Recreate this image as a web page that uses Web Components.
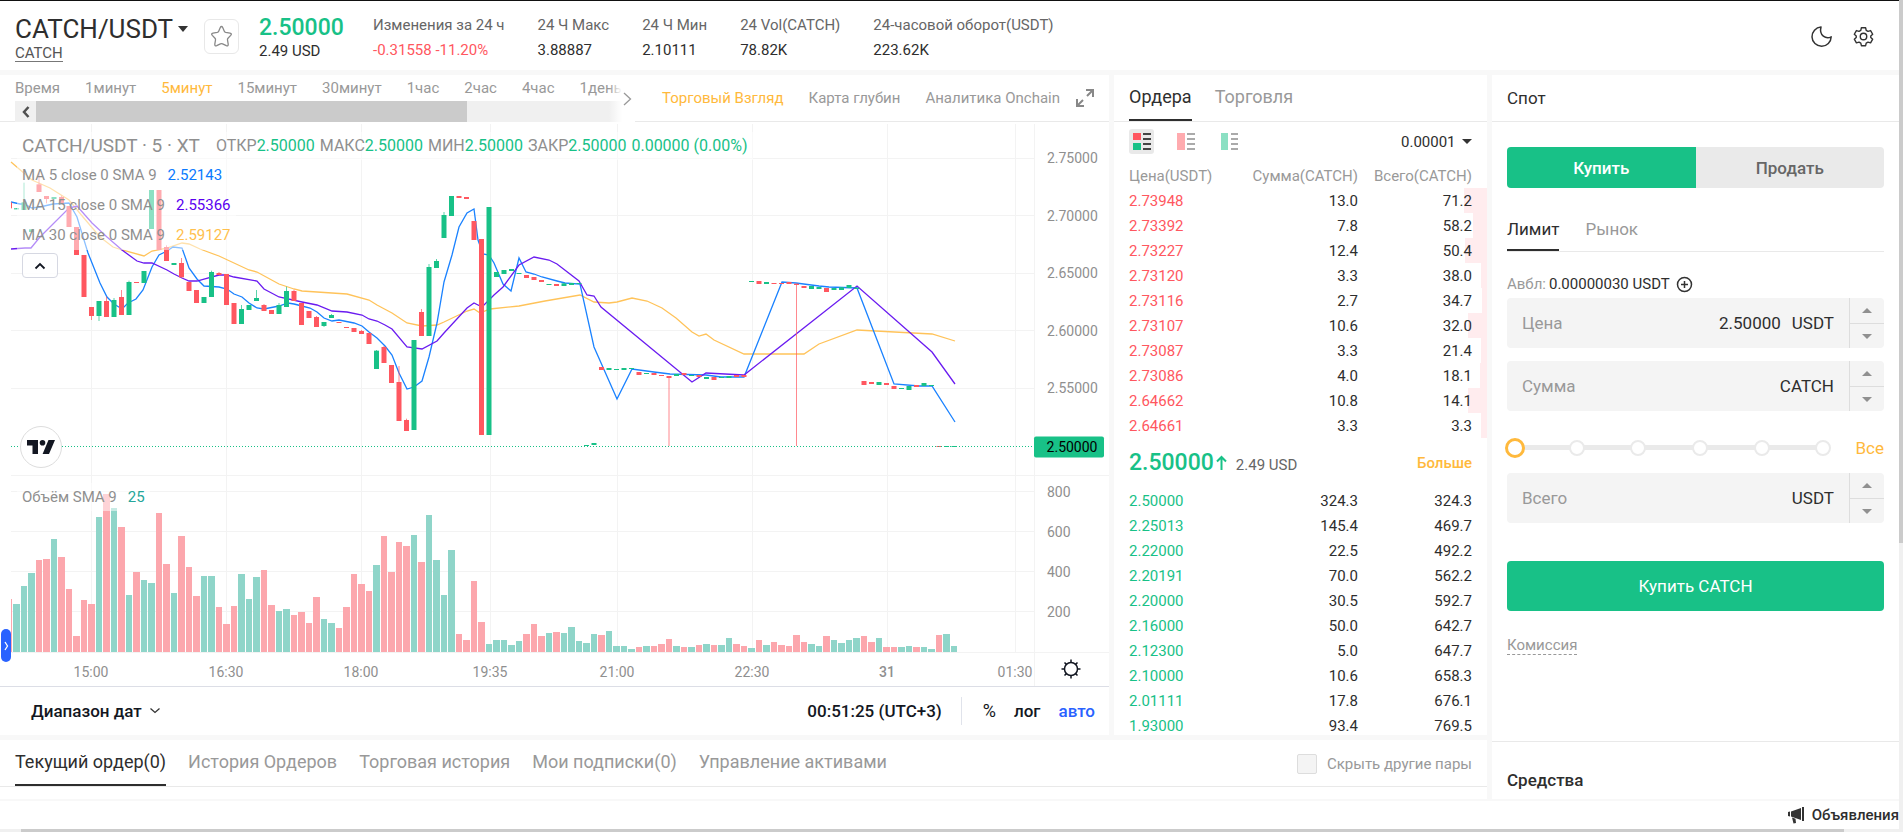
<!DOCTYPE html>
<html lang="ru">
<head>
<meta charset="utf-8">
<title>CATCH/USDT</title>
<style>
html,body{margin:0;height:100%}
body{font-family:Roboto,"Liberation Sans",sans-serif;font-size:15px;line-height:20px;color:#2e2e2e;background:#f8f8f8;
--green:#18c187;--red:#ff5760;--gold:#ffb93c;--muted:#999;--line:#e9e9e9}
</style>
</head>
<body>
<trade-app></trade-app>
<script>
const base=`*{box-sizing:border-box}button{font:inherit;color:inherit;background:none;border:0;padding:0;margin:0;white-space:nowrap}a{color:inherit;text-decoration:none}svg{display:block}`;
function component(name,css,html,setup){
  const t=document.createElement('template');
  t.innerHTML=`<style>${base}${css}</style>${html}`;
  customElements.define(name,class extends HTMLElement{
    constructor(){super();this.attachShadow({mode:'open'});}
    connectedCallback(){
      if(this.shadowRoot.childNodes.length)return;
      this.shadowRoot.append(t.content.cloneNode(true));
      if(setup)setup.call(this,this.shadowRoot);
    }
  });
}

/* one 24-hour figure in the header: caption above, value below */
component('market-stat',
`:host{display:flex;flex-direction:column;gap:5px;white-space:nowrap}
.cap{color:#666}`,
`<span class="cap"><slot name="caption"></slot></span><span><slot></slot></span>`);

component('pair-header',
`:host{display:flex;align-items:flex-start;height:70px;padding:14px 25px 0 15px;background:#fff;border-top:1px solid #111}
h1{margin:0;font-size:26px;line-height:28px;font-weight:400;display:flex;align-items:center;gap:5px}
.pair{width:189px}
.pair a{display:inline-block;border-bottom:1px solid #777;color:#555;line-height:16px;margin-top:1px}
.fav{width:35px;height:35px;border:1px solid #e8e8e8;border-radius:6px;display:grid;place-items:center;margin:4px 20px 0 0}
.last{width:114px;display:flex;flex-direction:column}
.last b{font-size:23px;line-height:26px;font-weight:500;color:var(--green)}
.stats{display:flex;gap:33px;flex:1}
.down{color:var(--red)}
.tools{display:flex;gap:20px;align-items:center;margin-top:10px}`,
`<div class="pair"><h1>CATCH/USDT <svg width="10" height="6"><path d="M0 0h10L5 6z" fill="#333"/></svg></h1><a href="#catch">CATCH</a></div>
<button class="fav" aria-label="В избранное"><svg width="23" height="23" viewBox="0 0 23 23"><path d="M11.500 1.500Q12.200 1.500 12.700 2.600L14.300 6.300Q14.700 7.200 15.700 7.400L20 8.100Q22.300 8.600 20.700 10.400L18 13.200Q17.300 14 17.500 15L18.200 19.200Q18.300 21.400 16.300 20.600L12.600 18.800Q11.500 18.300 10.400 18.800L6.700 20.600Q4.700 21.400 4.800 19.200L5.500 15Q5.700 14 5 13.200L2.300 10.400Q.7 8.600 3 8.100L7.300 7.400Q8.300 7.200 8.700 6.300L10.300 2.600Q10.800 1.500 11.500 1.500z" fill="none" stroke="#888" stroke-width="1.300" stroke-linejoin="round"/></svg></button>
<div class="last"><b>2.50000</b><span>2.49 USD</span></div>
<div class="stats">
<market-stat><span slot="caption">Изменения за 24 ч</span><span class="down">-0.31558 -11.20%</span></market-stat>
<market-stat><span slot="caption">24 Ч Макс</span>3.88887</market-stat>
<market-stat><span slot="caption">24 Ч Мин</span>2.10111</market-stat>
<market-stat><span slot="caption">24 Vol(CATCH)</span>78.82K</market-stat>
<market-stat><span slot="caption">24-часовой оборот(USDT)</span>223.62K</market-stat>
</div>
<div class="tools">
<button aria-label="Тёмная тема"><svg width="23" height="23" viewBox="0 0 23 23"><path d="M11 2A9.600 9.600 0 1 0 21.200 11.800 C16 14.500 8.800 10.500 11 2z" fill="none" stroke="#333" stroke-width="1.500" stroke-linejoin="round"/></svg></button>
<button aria-label="Настройки"><svg width="21" height="21" viewBox="0 0 24 24" fill="none" stroke="#333" stroke-width="1.600" stroke-linejoin="round"><circle cx="12" cy="12" r="3.700"/><path d="M9.600 2h4.800l.7 3 2 1.100 3-.9 2.400 4.200-2.200 2v1.700l2.200 2-2.400 4.200-3-.9-2 1.100-.7 3H9.600l-.7-3-2-1.100-3 .9-2.400-4.200 2.200-2v-1.700l-2.200-2L3.900 5.200l3 .9 2-1.100z"/></svg></button>
</div>`);

component('chart-toolbar',
`:host{display:flex;height:47px;border-bottom:1px solid var(--line);color:var(--muted)}
.times{position:relative;width:620px;margin-left:15px;margin-bottom:-1px}
.row{display:flex;gap:25px;height:26px;padding-top:3px;overflow:hidden}
.row button{height:20px}
.bar{height:21px;display:flex;background:#f0f0f0}
.bar i{width:431px;background:#cbcbcb}
.bar button{width:21px;display:grid;place-items:center}
.fade{position:absolute;right:0;top:0;bottom:0;width:26px;background:linear-gradient(to right,#fff0,#fff 50%);display:flex;align-items:center;justify-content:flex-end}
.fade svg{margin-right:3px}
.on{color:var(--gold)}
.views{flex:1;display:flex;align-items:center;justify-content:flex-end;gap:25px;padding-right:15px}
.views svg{margin-left:-9px}`,
`<div class="times"><div class="row"><button>Время</button><button>1минут</button><button class="on">5минут</button><button>15минут</button><button>30минут</button><button>1час</button><button>2час</button><button>4час</button><button>1день</button></div>
<div class="bar"><button aria-label="Назад"><svg width="8" height="12" viewBox="0 0 8 12"><path d="M6.500 1 2 6l4.500 5" fill="none" stroke="#505050" stroke-width="2.500"/></svg></button><i></i></div>
<div class="fade"><svg width="9" height="16" viewBox="0 0 9 16"><path d="M1 2l6.500 6L1 14" fill="none" stroke="#999" stroke-width="1.300"/></svg></div></div>
<div class="views"><button class="on">Торговый Взгляд</button><button>Карта глубин</button><button>Аналитика Onchain</button>
<button aria-label="Развернуть"><svg width="18" height="18" viewBox="0 0 18 18" fill="none" stroke="#888" stroke-width="2"><path d="M10 1h7v7M17 1l-6 6M8 17H1v-7M1 17l6-6"/></svg></button></div>`);

/* chart space: x from 0 to 1109, y from 0 to 564; prices and volume share it */
const W=1109,H=564;
const candles=`-11R247,247,265,265 -10G265,265,267,267 -9G188,247,270 -8G328,328,336 -7R160,193,216 -6R228,228,237,250 -5G231,231,237 -4R227,231,250 -3R258,258,321 -2R321,321,405 -1R405,405,531 0R561,561,588,600 1G543,543,588,603 2R530,543,591 3G534,540,591 4R510,531,585 5G482,486,585 6R486,486,489 7G453,453,489 8G210,210,327 9R210,210,390 10R376,381,423 11G429,429,435 12R414,429,472 13R486,486,513 14R510,510,549 15G531,531,549 16G452,456,531 17R456,459,465 18R462,462,555 19R549,549,612 20G555,567,612 21G555,555,570 22G510,534,543 23R552,555,573 24R570,570,582 25G549,555,582 26G500,513,561 27R509,513,543 28R549,549,615 29R573,573,594 30R588,591,621 31G606,606,618,621 32G582,585,594 33R606,606,609 34R621,621,624 35R624,624,636 36R630,633,642 37R639,639,672 38G690,692,747 39R678,681,729 40R735,735,789 41R738,786,903 42R896,900,933 43G660,660,930 44R567,576,648 45G432,441,648 46G417,423,444 47G276,285,354 48G228,228,288 49R228,228,234 50R231,231,237 51R303,303,360 52R357,357,945 53G261,261,945 54G456,456,471 55G450,450,462 56G447,447,453 57G459,459,462 58R465,465,474 59R471,471,480 60R480,480,486 61G492,492,495 62R492,492,498 63G490,490,498 64G489,489,495 65G489,489,492 66G975,975,978 67G969,969,975 68R741,741,750 69G744,744,750 70G747,747,750 71G744,744,750 72G744,744,747 73R756,756,765 74G759,759,762 75R759,759,765 76R765,765,768 77R768,768,774,978 78G762,762,768 79R759,759,765 80G765,765,768 81R765,765,771 82G771,771,777 83R771,771,780 84G771,771,774 85G768,768,774 86R765,765,771 87R765,765,771 88G483,483,486 89R483,483,492 90G486,486,492 91R489,489,492 92R489,489,492 93R486,486,492 94R491,491,495,978 95R498,498,504 96G498,498,507 97G501,501,507 98R504,504,516 99G504,504,510 100G502,502,510 101G495,495,504 102G503,503,507 103R783,783,795 104R786,786,792 105G786,786,795 106R789,789,795 107R798,798,807 108G804,804,807 109G798,798,810 110R795,795,801 111G789,789,798 112G795,795,798 113R978,978,981 114G978,978,981 115G978,978,981`;
/* volume heights, one per five-minute bar, first bar eleven steps before 15:00 */
const volumes=`R53 G48 G66 G79 R92 R93 G113 R95 R63 R16 R52 R48 G135 R158 G144 R125 G57 R80 G72 G69 R139 R88 G59 R116 R85 R56 G76 G76 R45 R28 R46 G78 G53 G75 R82 R47 G41 G43 R37 R40 R29 R55 G33 G29 R24 R45 R78 R68 R61 G87 R116 R80 R110 R106 G117 R90 G137 G92 G57 G102 R18 R12 R71 R30 G8 G12 G12 G7 G11 R18 R28 R16 G19 R20 G19 G25 G11 G9 G18 R17 G21 G6 G6 G3 R5 G6 R6 R8 R13 G6 R5 G5 R7 G8 R7 G7 G14 R8 R6 G4 R12 G7 R10 R7 R6 R17 R10 G8 G6 R16 G12 G9 G12 G14 R16 R10 G14 R5 R5 G5 G6 R5 G5 G3 R17 G18 G6`;
const lines={
'#ffc35a':`11,162 32,180 50,188 69,200 83,217 100,237 113,247 122,250 144,256 152,251 167,248 182,243 189,244 200,249 219,256 249,270 257,272 279,284 294,289 302,291 347,294 369,300 377,305 392,313 407,323 422,326 437,325 444,322 467,311 474,309 480,313 490,309 519,306 545,301 580,295 594,302 609,303 617,302 632,298 647,301 662,308 676,318 692,332 699,336 706,334 714,340 744,354 804,354 819,344 857,330 932,334 955,341`,
'#1a82ff':`11,202 20,204 24,204 32,208 40,207 53,204 69,203 77,217 88,253 100,283 107,297 114,304 122,309 128,303 136,299 143,290 152,267 159,255 167,251 173,247 182,248 189,268 197,279 204,286 219,287 227,289 234,294 242,297 249,303 257,308 264,309 279,306 288,303 294,304 302,306 310,308 317,312 324,318 332,321 339,320 354,323 362,326 369,332 377,338 385,346 392,355 399,373 407,389 414,387 422,381 429,357 437,323 444,282 452,255 459,227 467,213 474,209 478,240 483,254 489,255 494,263 503,284 511,291 519,258 526,272 534,274 542,277 557,281 565,283 580,284 594,347 617,399 632,369 654,372 670,374 706,375 721,377 744,377 782,282 796,283 819,286 829,287 857,288 894,384 919,386 932,386 955,422`,
'#6a1bf0':`11,249 25,248 31,248 40,237 69,208 77,206 92,223 107,237 122,250 137,261 144,263 152,263 167,270 174,274 182,278 189,281 197,281 204,279 219,275 227,275 234,277 257,281 264,289 279,297 302,302 317,305 332,311 347,312 362,315 369,319 377,321 385,325 392,329 407,347 422,349 437,341 444,333 467,308 474,303 482,307 494,295 503,287 519,265 534,257 549,260 557,264 579,281 587,295 594,296 601,307 692,382 706,373 744,375 857,286 932,352 955,384`};

component('price-chart',
`:host{position:relative;display:block;min-height:0;border-bottom:1px solid #dcdee6;color:#8f8f8f;font-size:14px}
svg.plot{position:absolute;width:100%;height:100%}
.axis span{position:absolute;line-height:18px;white-space:nowrap}
.price span{left:94.400%;transform:translateY(-50%)}
.time span{transform:translate(-50%,-50%)}
.tag{position:absolute;left:93.200%;right:5px;height:21px;line-height:21px;padding-left:13px;background:var(--green);color:#000;border-radius:2px;transform:translateY(-50%)}
.legend{position:absolute;left:17px;top:10px;display:flex;flex-direction:column;align-items:flex-start;font-size:15px}
.legend>div{background:#ffffff80;padding:0 5px;height:30px;line-height:30px;white-space:nowrap;display:flex}
.legend .title{height:28px;line-height:28px;font-size:16px}
.title strong{font-size:19px;font-weight:400;margin-right:16px}
.title span{margin-right:5px}
.title em,.vol em{font-style:normal;color:var(--green)}
.legend b{font-weight:400;margin-left:11px}
.fold{width:36px;height:25px;border:1px solid #d6d8e2;border-radius:4px;background:#fffc;margin:3px 5px;display:grid;place-items:center}
.vol{position:absolute;left:17px;top:64%;height:28px;line-height:28px;padding:0 5px;background:#ffffff80;font-size:15px;display:flex;gap:11px}
.logo{position:absolute;left:20px;top:304px;width:42px;height:42px;border:1px solid #ddd;border-radius:50%;background:#fff;display:grid;place-items:center}
.gear{position:absolute;left:96.600%;top:97%;transform:translate(-50%,-50%)}
.side{position:absolute;left:1px;top:507px;width:10px;height:33px;border-radius:5px;background:#2962ff;display:grid;place-items:center}`,
`<svg class="plot" viewBox="0 0 ${W} ${H}" preserveAspectRatio="none"></svg>
<div class="axis price"></div><div class="axis time"></div>
<div class="tag">2.50000</div>
<div class="legend"><div class="title"><strong>CATCH/USDT · 5 · XT</strong><span>ОТКР<em>2.50000</em></span><span>МАКС<em>2.50000</em></span><span>МИН<em>2.50000</em></span><span>ЗАКР<em>2.50000</em></span><em>0.00000 (0.00%)</em></div>
<div>MA 5 close 0 SMA 9<b style="color:#0a7aff">2.52143</b></div><div>MA 15 close 0 SMA 9<b style="color:#5a00f0">2.55366</b></div><div>MA 30 close 0 SMA 9<b style="color:#ffc04d">2.59127</b></div>
<button class="fold" aria-label="Свернуть"><svg width="12" height="8"><path d="M1.500 6.500 6 2l4.500 4.500" fill="none" stroke="#131722" stroke-width="1.800"/></svg></button></div>
<div class="vol">Объём SMA 9<em style="color:#26a69a">25</em></div>
<a class="logo" href="#tv" aria-label="TradingView"><svg width="28" height="14" viewBox="0 0 28 14" fill="#131722"><path d="M0 0h11v14H5.500V5.500H0zM21.500 0H28l-6 14h-6.400z"/><circle cx="15.500" cy="2.800" r="2.800"/></svg></a>
<button class="gear" aria-label="Настройки графика"><svg width="20" height="20" viewBox="0 0 20 20" fill="none" stroke="#131722" stroke-width="1.500"><circle cx="10" cy="10" r="6.500"/><path d="M10 3.500V.5M10 19.500v-3M3.500 10h-3M19.500 10h-3M5.400 5.400 3.500 3.500M14.600 5.400l1.900-1.900M5.400 14.600l-1.900 1.900M14.600 14.600l1.900 1.900"/></svg></button>
<button class="side" aria-label="Панель рисования"><svg width="5" height="10"><path d="M1 1l2.500 4L1 9" fill="none" stroke="#fff" stroke-width="1.300"/></svg></button>`,
function(root){
  const Y=v=>v/3-2, X=i=>91+7.5*i, col=c=>c==='R'?'#ff5760':'#18c187';
  let s='<g stroke="#f3f3f3" shape-rendering="crispEdges">';
  for(const x of [91,226,361,490,617,752,887,1015])s+=`<path d="M${x+.5} 2V530"/>`;
  for(const y of [36,93,151,208,266,369,409,449,489])s+=`<path d="M11 ${y+.5}H1034"/>`;
  s+=`<path d="M11 353.5H${W}M11 530.5H${W}M1034.5 2V${H}"/></g><g shape-rendering="crispEdges">`;
  volumes.split(' ').forEach((v,k)=>{const h=+v.slice(1),x=k?X(k-11)-3:11;
    s+=`<rect x="${x}" y="${530-h}" width="${k?6.700:1}" height="${h}" fill="${v[0]==='R'?'#fca7ad':'#8fd5c9'}"/>`;});
  s+='</g>';
  for(const c in lines)s+=`<polyline transform="translate(0 -122)" points="${lines[c]}" fill="none" stroke="${c}" stroke-width="1.300"/>`;
  for(const c of candles.split(' ')){
    const m=/^(-?\d+)([RG])(.*)$/.exec(c),i=+m[1],[a,b,d,e=d]=m[3].split(',').map(Number),x=X(i)+.5;
    if(i<-10){s+=`<rect x="11" y="${Y(a)}" width="1" height="6" fill="${col('R')}"/>`;continue;}
    s+=`<path d="M${x} ${Y(a)}V${Y(e)}" stroke="${col(m[2])}" stroke-opacity=".7"/><rect x="${x-2.5}" y="${Y(b)}" width="5" height="${Math.max(1,(d-b)/3)}" fill="${col(m[2])}"/>`;
  }
  s+=`<path d="M11 324.500H1034" stroke="#18c187" stroke-dasharray="1 2"/>`;
  root.querySelector('.plot').innerHTML=s;
  root.querySelector('.price').innerHTML=[['2.75000',36],['2.70000',94],['2.65000',151],['2.60000',209],['2.55000',266],['800',370],['600',410],['400',450],['200',490]]
    .map(([t,y])=>`<span style="top:${(y/H*100).toFixed(2)}%">${t}</span>`).join('');
  root.querySelector('.time').innerHTML=[['15:00',91],['16:30',226],['18:00',361],['19:35',490],['21:00',617],['22:30',752],['31',887],['01:30',1015]]
    .map(([t,x])=>`<span style="left:${(x/W*100).toFixed(2)}%;top:97.500%${t==='31'?';font-weight:500':''}">${t}</span>`).join('');
  root.querySelector('.tag').style.top=(325/H*100).toFixed(2)+'%';
});

component('range-bar',
`:host{display:flex;align-items:center;height:48px;padding:0 14px 0 31px;font-size:17px;color:#131722}
button{font-weight:500;display:flex;align-items:center;gap:7px}
.clock{margin-left:auto;padding-right:19px;height:28px;border-right:1px solid #e0e3eb;margin-right:21px}
.scale{display:flex;gap:18px}
.on{color:#2962ff}.pc{font-weight:400;font-size:18px}`,
`<button>Диапазон дат <svg width="12" height="8"><path d="M1.500 1.500 6 5.500l4.500-4" fill="none" stroke="#333" stroke-width="1.300"/></svg></button>
<button class="clock">00:51:25 (UTC+3)</button><div class="scale"><button class="pc">%</button><button>лог</button><button class="on">авто</button></div>`);

component('order-book',
`:host{display:flex;flex-direction:column;background:#fff;min-height:0;overflow:hidden}
nav{display:flex;gap:23px;height:47px;flex:none;padding:0 15px;border-bottom:1px solid var(--line);font-size:18px;color:var(--muted)}
nav button{height:46px;border-bottom:2px solid transparent}
nav .on{color:#2e2e2e;border-color:#2e2e2e}
.modes{display:flex;align-items:center;gap:19px;padding:7px 15px 9px;flex:none;height:41px}
.modes button{width:25px;height:25px;border-radius:3px;display:grid;place-items:center}
.modes .on{background:#e9e9e9}
.modes label{margin-left:auto;display:flex;align-items:center;gap:6px}
select{appearance:none;border:0;background:none;font:inherit;color:inherit;padding:0}
table{border-collapse:collapse;width:100%;table-layout:fixed;flex:none}
th,td{font-weight:400;padding:0;height:25px;text-align:right;line-height:20px}
th{color:var(--muted)}
tr>:first-child{text-align:left;padding-left:15px;width:120px}
tr>:nth-child(2){width:124px}
tr>:last-child{padding-right:15px}
.asks td:first-child{color:var(--red)}.bids td:first-child{color:var(--green)}
.asks tr{background:linear-gradient(to left,#ffecee var(--depth),transparent 0)}
.mid{display:flex;align-items:center;height:50px;padding:0 15px;flex:none}
.mid b{font-size:23px;font-weight:500;color:var(--green);margin-right:2px}
.mid span{color:#666;margin-left:9px;margin-top:4px}.mid a{margin-left:auto;color:var(--gold);font-weight:500}`,
`<nav><button class="on">Ордера</button><button>Торговля</button></nav>
<div class="modes">
<button class="on" aria-label="Все ордера"><svg width="18" height="17"><path fill="#ff5760" d="M0 0h8v7H0z"/><path fill="#18c187" d="M0 10h8v7H0z"/><path d="M10 1h8M10 6h8M10 11h8M10 16h8" stroke="#444" stroke-width="2"/></svg></button>
<button aria-label="Продажи"><svg width="18" height="17"><path fill="#ffabaf" d="M0 0h8v17H0z"/><path d="M10 1h8M10 6h8M10 11h8M10 16h8" stroke="#aaa" stroke-width="2"/></svg></button>
<button aria-label="Покупки"><svg width="18" height="17"><path fill="#8be0c3" d="M0 0h7v17H0z"/><path d="M10 1h7M10 6h7M10 11h7M10 16h7" stroke="#aaa" stroke-width="2"/></svg></button>
<label><select aria-label="Точность"><option>0.00001</option></select><svg width="10" height="5"><path d="M0 0h10L5 5z" fill="#333"/></svg></label></div>
<table class="asks"><thead><tr style="--depth:0"><th>Цена(USDT)</th><th>Сумма(CATCH)</th><th>Всего(CATCH)</th></tr></thead><tbody></tbody></table>
<div class="mid"><b>2.50000</b><svg width="11" height="16"><path d="M5.500 15V2M1 6.500 5.500 2 10 6.500" fill="none" stroke="#18c187" stroke-width="2"/></svg><span>2.49 USD</span><a href="#more">Больше</a></div>
<table class="bids"><tbody></tbody></table>`,
function(root){
  const row=r=>`<tr${r[3]?` style="--depth:${r[3]}px"`:''}><td>${r[0]}</td><td>${r[1]}</td><td>${r[2]}</td></tr>`;
  root.querySelector('.asks tbody').innerHTML=[['2.73948','13.0','71.2',23],['2.73392','7.8','58.2',14],['2.73227','12.4','50.4',22],['2.73120','3.3','38.0',6],['2.73116','2.7','34.7',5],['2.73107','10.6','32.0',19],['2.73087','3.3','21.4',6],['2.73086','4.0','18.1',7],['2.64662','10.8','14.1',19],['2.64661','3.3','3.3',6]].map(row).join('');
  root.querySelector('.bids tbody').innerHTML=[['2.50000','324.3','324.3'],['2.25013','145.4','469.7'],['2.22000','22.5','492.2'],['2.20191','70.0','562.2'],['2.20000','30.5','592.7'],['2.16000','50.0','642.7'],['2.12300','5.0','647.7'],['2.10000','10.6','658.3'],['2.01111','17.8','676.1'],['1.93000','93.4','769.5']].map(row).join('');
});

component('amount-field',
`:host{display:flex;height:50px;background:#f4f4f4;border-radius:4px;font-size:17px}
label{padding-left:15px;align-self:center;color:var(--muted)}
input{flex:1;min-width:0;border:0;background:none;font:inherit;color:inherit;text-align:right;padding:0 11px;outline:0}
.unit{align-self:center;padding-right:15px}
.step{width:35px;border-left:1px solid #ddd;display:grid;grid-template-rows:1fr 1fr}
.step button{display:grid;place-items:center}.step button+button{border-top:1px solid #ddd}`,
`<label for="v"></label><input id="v" inputmode="decimal"><span class="unit"></span>
<div class="step"><button aria-label="Больше"><svg width="10" height="5"><path d="M0 5h10L5 0z" fill="#909090"/></svg></button><button aria-label="Меньше"><svg width="10" height="5"><path d="M0 0h10L5 5z" fill="#909090"/></svg></button></div>`,
function(root){
  root.querySelector('label').textContent=this.getAttribute('caption');
  root.querySelector('.unit').textContent=this.getAttribute('unit');
  root.querySelector('input').value=this.getAttribute('value')||'';
});

component('trade-form',
`:host{display:flex;flex-direction:column;background:#fff;min-height:0;overflow:hidden}
h2{margin:0;height:47px;line-height:46px;padding:0 15px;font-size:17px;font-weight:400;border-bottom:1px solid var(--line);flex:none}
form{padding:25px 15px 0;height:619px;flex:none;display:flex;flex-direction:column}
.side{display:grid;grid-template-columns:1fr 1fr;height:41px;border-radius:4px;overflow:hidden;font-size:17px}
.side button{font-weight:500;color:#666;background:#eaeaea}
.side button.on,.submit{color:#fff;background:var(--green)}
nav{display:flex;gap:26px;margin-top:23px;height:41px;border-bottom:1px solid var(--line);font-size:17px;color:var(--muted)}
nav button{height:40px;padding-bottom:2px;border-bottom:2px solid transparent}
nav .on{color:#2e2e2e;border-color:#2e2e2e}
.avail{display:flex;align-items:center;gap:3px;height:20px;margin:22px 0 4px}
.avail span{color:var(--muted)}
.avail button{margin-left:3px}
amount-field+amount-field{margin-top:13px}
.slide{display:flex;align-items:center;margin:25px 0 14px -2px;height:23px}
.track{flex:1;display:grid;align-items:center;margin-right:22px}
.track>*{grid-area:1/1}
.dots{display:flex;justify-content:space-between;padding:0 2px;background:linear-gradient(#eaeaea,#eaeaea) center/calc(100% - 20px) 5px no-repeat}
.dots i{width:16px;height:16px;border:2px solid #eaeaea;border-radius:50%;background:#fff}
input{appearance:none;width:100%;height:20px;margin:0;background:none}
input::-webkit-slider-thumb{appearance:none;width:20px;height:20px;border:3px solid var(--gold);border-radius:50%;background:#fff}
.slide button{color:var(--gold);font-size:17px}
.submit{height:50px;border-radius:4px;font-size:17px;margin:38px 0 25px}
.fee{align-self:flex-start;color:var(--muted);line-height:18px;border-bottom:1px dashed #999}
.funds{border-top:1px solid var(--line);padding:28px 15px 0;font-size:17px;font-weight:500}`,
`<h2>Спот</h2>
<form onsubmit="return false"><div class="side"><button type="button" class="on">Купить</button><button type="button">Продать</button></div>
<nav><button type="button" class="on">Лимит</button><button type="button">Рынок</button></nav>
<div class="avail"><span>Авбл:</span>0.00000030 USDT <button type="button" aria-label="Пополнить"><svg width="17" height="17" fill="none" stroke="#333" stroke-width="1.500"><circle cx="8.500" cy="8.500" r="7"/><path d="M8.500 5v7M5 8.500h7"/></svg></button></div>
<amount-field caption="Цена" unit="USDT" value="2.50000"></amount-field><amount-field caption="Сумма" unit="CATCH"></amount-field>
<div class="slide"><div class="track"><div class="dots"><i></i><i></i><i></i><i></i><i></i><i></i></div><input type="range" aria-label="Доля баланса" min="0" max="100" step="20" value="0"></div><button type="button">Все</button></div>
<amount-field caption="Всего" unit="USDT"></amount-field>
<button class="submit">Купить CATCH</button><a class="fee" href="#fee">Комиссия</a></form>
<section class="funds">Средства</section>`);

component('order-tabs',
`:host{display:flex;align-items:flex-start;height:59px;background:#fff;padding:0 15px;font-size:18px;color:var(--muted);background-image:linear-gradient(var(--line),var(--line));background-repeat:no-repeat;background-size:100% 1px;background-position:0 46px}
nav{display:flex;gap:22px}
nav button{height:46px;border-bottom:2px solid transparent}
nav .on{color:#2e2e2e;border-color:#2e2e2e}
label{margin-left:auto;height:47px;display:flex;align-items:center;gap:10px;font-size:15px}
input{appearance:none;width:20px;height:20px;margin:0;border:1px solid #ddd;border-radius:2px;background:#f4f4f4}`,
`<nav><button class="on">Текущий ордер(0)</button><button>История Ордеров</button><button>Торговая история</button><button>Мои подписки(0)</button><button>Управление активами</button></nav>
<label><input type="checkbox">Скрыть другие пары</label>`);

component('news-bar',
`:host{display:flex;justify-content:flex-end;align-items:center;height:30px;border-top:2px solid #f8f8f8;background:#fff}
a{display:flex;align-items:center;gap:7px;font-weight:500}`,
`<a href="#news"><svg width="17" height="17" viewBox="0 0 17 17" fill="#333"><path d="M0 5l2-.5v5L0 9zM3 4.500 13 1v12L3 9.500zM14 0h2v14h-2zM4 10.500l3.500 1.200.5 4.300-2.500.5z"/></svg>Объявления</a>`);

component('trade-app',
`:host{display:grid;grid-template-columns:minmax(0,1fr) 4px;height:100vh}
.page{display:flex;flex-direction:column;min-width:0;height:100vh}
main{flex:1;min-height:0;display:grid;grid-template-columns:minmax(0,1fr) 407px;gap:5px;margin-top:5px}
.left{display:grid;grid-template-columns:minmax(0,1fr) 373px;grid-template-rows:minmax(0,1fr) auto;gap:5px;min-height:0}
.chart{display:flex;flex-direction:column;background:#fff;min-height:0}
price-chart{flex:1}
order-tabs{grid-column:1/-1}
.v{background:linear-gradient(#cbcbcb,#cbcbcb) 0 0/100% 65.300% no-repeat #f0f0f0}
.h{height:3px;flex:none;background:linear-gradient(#cbcbcb,#cbcbcb) 27% 0/96% 100% no-repeat #f0f0f0}`,
`<div class="page"><pair-header></pair-header><main><div class="left"><section class="chart"><chart-toolbar></chart-toolbar><price-chart></price-chart><range-bar></range-bar></section><order-book></order-book><order-tabs></order-tabs></div><trade-form></trade-form></main><news-bar></news-bar><div class="h"></div></div><div class="v"></div>`);
</script>
</body>
</html>
